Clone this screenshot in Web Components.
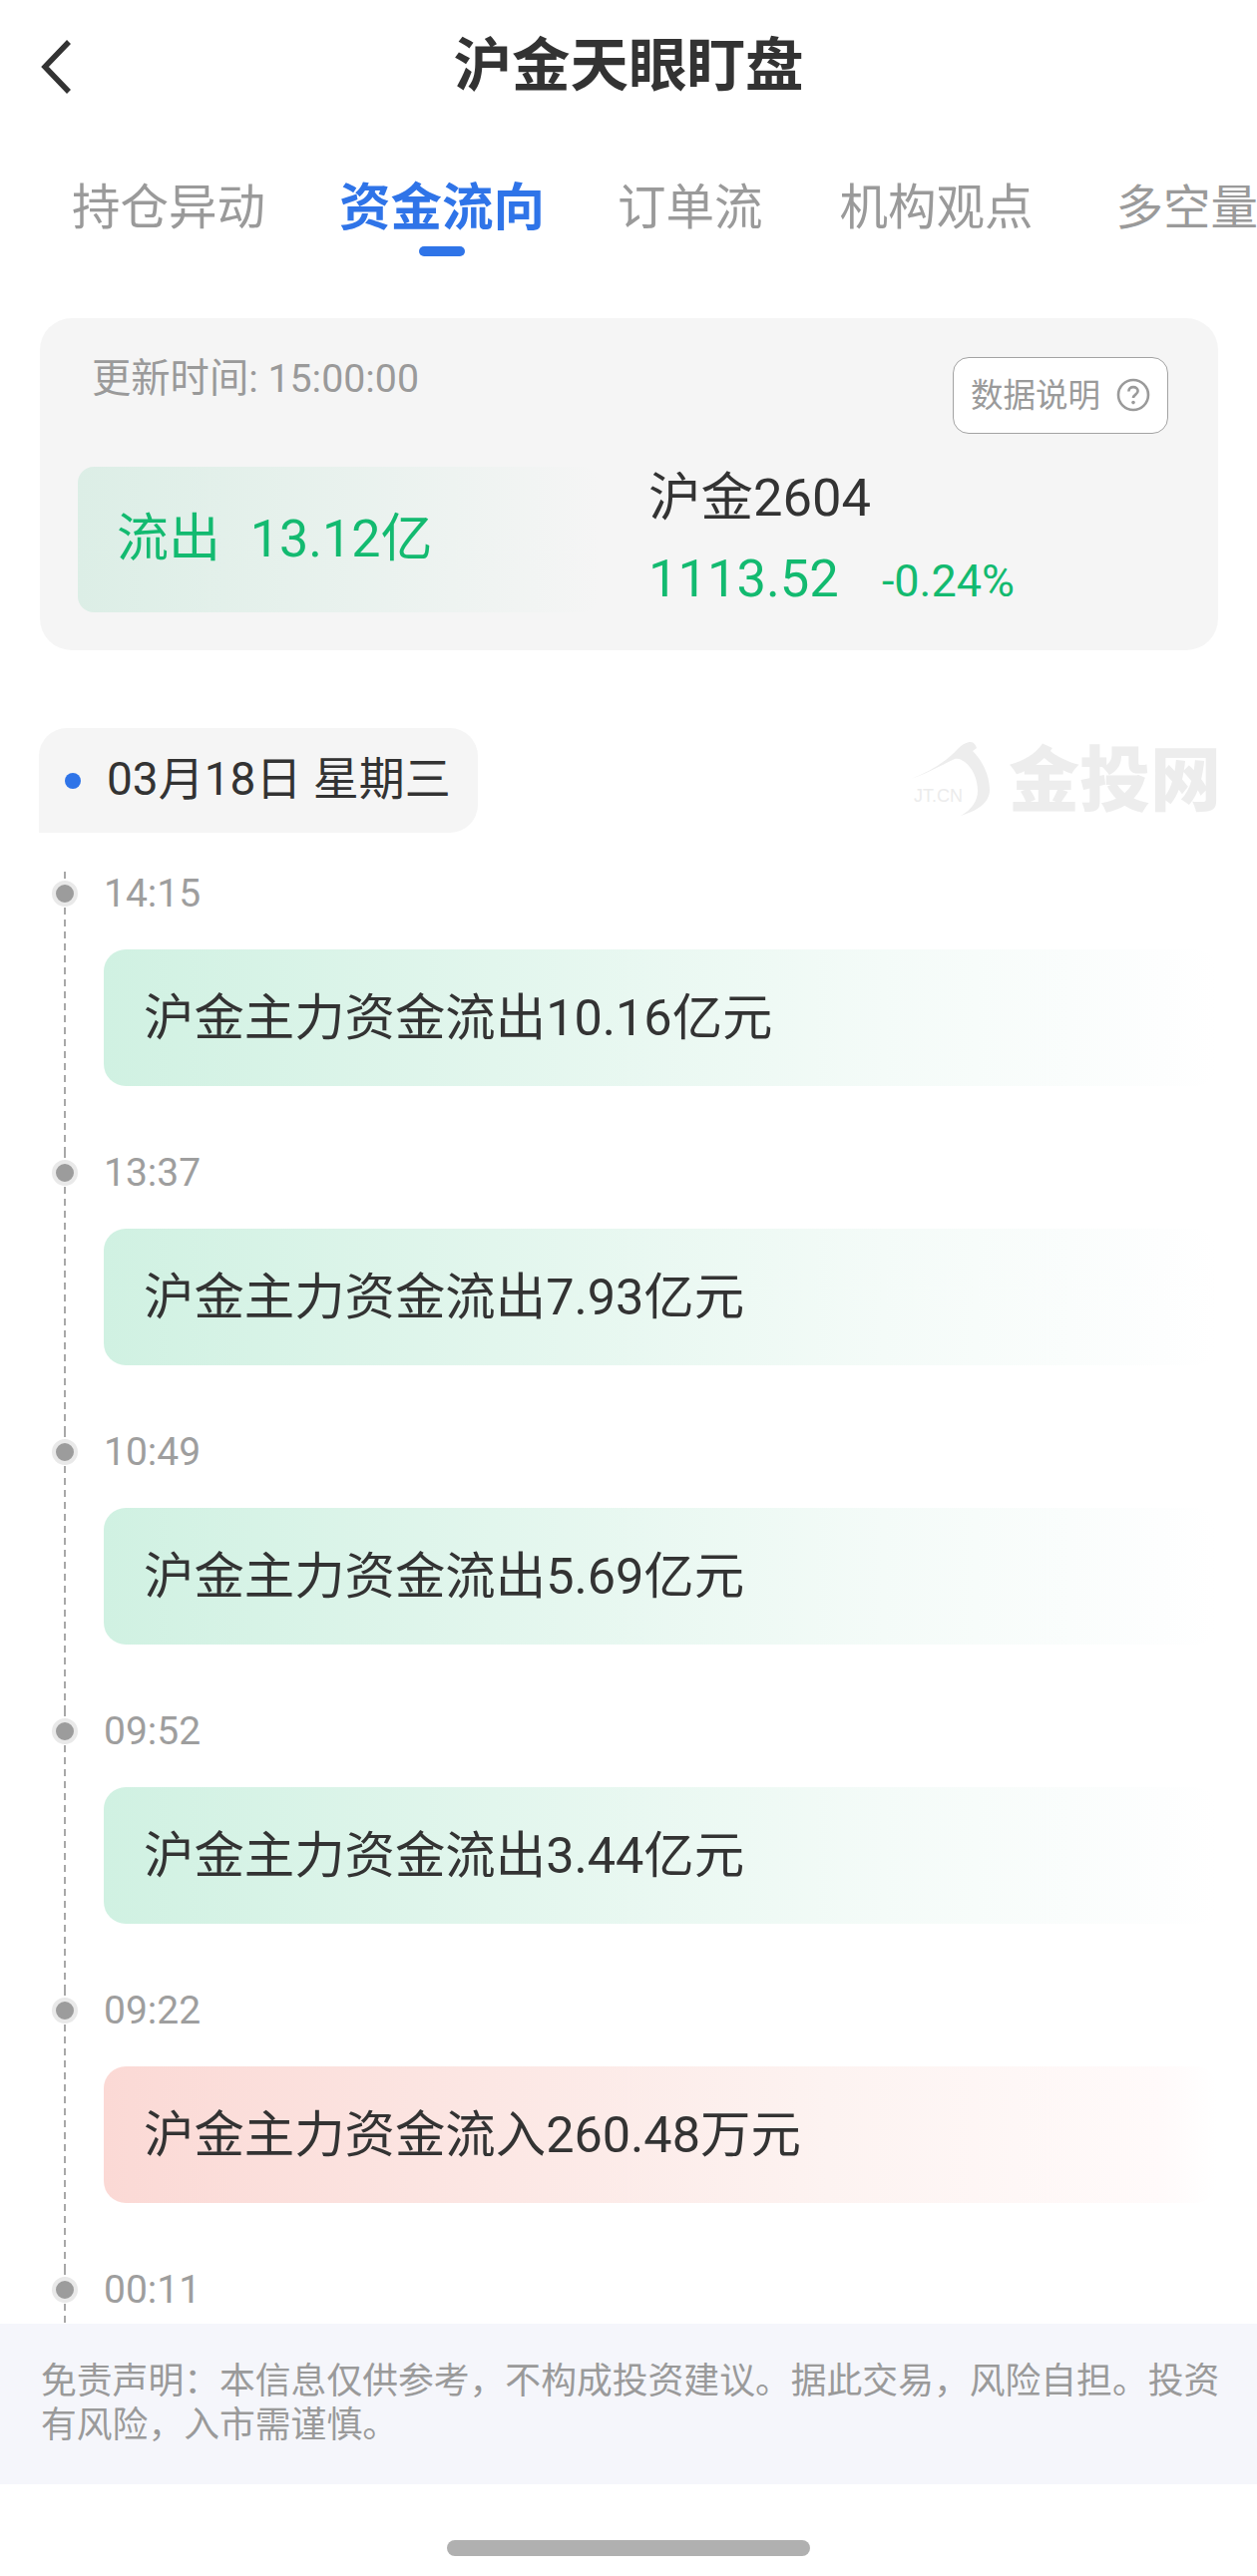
<!DOCTYPE html>
<html lang="zh-CN"><head><meta charset="utf-8"><style>
html,body{margin:0;padding:0;background:#fff}
body{width:1260px;height:2583px;overflow:hidden;display:flex;flex-direction:column;font-family:Roboto,"Noto Sans CJK SC",sans-serif;color:#333}
jt-timeline{flex:1;min-height:0}
</style></head><body>
<jt-header>沪金天眼盯盘</jt-header>
<jt-tabs></jt-tabs>
<jt-summary></jt-summary>
<jt-date>03月18日 星期三</jt-date>
<jt-timeline>
<jt-event time="14:15" kind="out">沪金主力资金流出10.16亿元</jt-event>
<jt-event time="13:37" kind="out">沪金主力资金流出7.93亿元</jt-event>
<jt-event time="10:49" kind="out">沪金主力资金流出5.69亿元</jt-event>
<jt-event time="09:52" kind="out">沪金主力资金流出3.44亿元</jt-event>
<jt-event time="09:22" kind="in">沪金主力资金流入260.48万元</jt-event>
<jt-event time="00:11"></jt-event>
</jt-timeline>
<jt-disclaimer>免责声明：本信息仅供参考，不构成投资建议。据此交易，风险自担。投资有风险，入市需谨慎。</jt-disclaimer>
<jt-homebar></jt-homebar>
<script>
function def(name, html, init){
  customElements.define(name, class extends HTMLElement{
    connectedCallback(){
      if(this.shadowRoot) return;
      const r=this.attachShadow({mode:'open'});
      r.innerHTML=html;
      if(init) init(r,this);
    }
  });
}
def('jt-header',`<style>
:host{display:flex;height:130px;align-items:center;justify-content:center;position:relative;flex:none}
svg{position:absolute;left:38px;top:38px}
.t{font-size:58.5px;font-weight:700;line-height:70px;color:#333;padding-top:2px}
</style><svg width="36" height="58" viewBox="0 0 36 58" fill="none"><path d="M31 4 7 29l24 25" stroke="#333" stroke-width="5.5"/></svg><div class="t"><slot></slot></div>`);

def('jt-tabs',`<style>
:host{display:flex;flex:none;height:128px;padding:49px 0 0 72px;box-sizing:border-box;overflow:hidden;white-space:nowrap}
.tab{flex:none;display:flex;flex-direction:column;align-items:center;font-size:48.5px;line-height:60px;color:#9a9a9a;margin-right:74px}
.on{font-size:51.5px;font-weight:700;color:#2f74e8;margin-right:73px}
.on::after{content:"";width:46px;height:10px;border-radius:5px;background:#2f74e8;margin-top:8px}
.t3{margin-right:77px}.t4{margin-right:83px}.t5{margin-right:0;font-size:47.5px}
</style>
<div class="tab">持仓异动</div><div class="tab on">资金流向</div><div class="tab t3">订单流</div><div class="tab t4">机构观点</div><div class="tab t5">多空量</div>`);

def('jt-summary',`<style>
:host{display:block;flex:none;margin:61px 39px 0 40px;height:333px;box-sizing:border-box;padding:39px 50px 0 38px;background:#f5f5f5;border-radius:32px}
.top{display:flex;justify-content:space-between;align-items:flex-start}
.upd{margin-left:14px;font-size:39.3px;line-height:44px;color:#9a9a9a}
.btn{width:216px;height:77px;box-sizing:border-box;padding-bottom:7px;border:1.5px solid #a3a3a3;border-radius:16px;background:#fff;display:flex;align-items:center;justify-content:center;gap:16px;font-size:32.5px;color:#9a9a9a}
.btn svg{margin-top:5px}
.row{display:flex;margin-top:33px}
.flow{width:522px;height:146px;border-radius:16px;box-sizing:border-box;padding-left:39px;background:linear-gradient(90deg,#dceee6,rgba(245,245,245,0));display:flex;align-items:center;color:#13ba70;font-size:52px;line-height:60px;white-space:pre;word-spacing:2px}
.info{margin-left:50px}
.name{font-size:52.5px;line-height:60px;color:#333;margin-top:1px}
.px{display:flex;align-items:baseline;color:#13ba70;margin-top:21px;line-height:60px}
.p{font-size:52.5px}.c{font-size:45px;margin-left:43px}
</style>
<div class="top"><div class="upd">更新时间: 15:00:00</div>
<div class="btn">数据说明<svg width="34" height="34" viewBox="0 0 34 34" fill="none"><circle cx="17" cy="17" r="15" stroke="#9a9a9a" stroke-width="2.6"/><path d="M12.4 13.4c0-2.7 2-4.3 4.6-4.3s4.6 1.6 4.6 4c0 3.6-4.6 3.5-4.6 7" stroke="#9a9a9a" stroke-width="2.6"/><circle cx="17" cy="24.6" r="1.8" fill="#9a9a9a"/></svg></div></div>
<div class="row"><div class="flow">流出  13.12亿</div>
<div class="info"><div class="name">沪金2604</div><div class="px"><span class="p">1113.52</span><span class="c">-0.24%</span></div></div></div>`);

def('jt-date',`<style>
:host{display:flex;flex:none;justify-content:space-between;align-items:flex-start;margin:78px 40px 29px;height:105px}
.pill{display:flex;align-items:center;background:#f5f5f5;border-radius:28px 28px 28px 0;margin-left:-1px;padding:0 27px 11px 26px;box-sizing:border-box;height:105px;font-size:46px;color:#333;white-space:nowrap}
.pill i{width:16px;height:16px;border-radius:50%;background:#2f74e8;margin:11px 26px 0 0}
svg{display:block;margin-top:-12px;margin-right:-16px}
</style>
<div class="pill"><i></i><slot></slot></div>
<svg width="328" height="114" viewBox="908 718 328 114"><path d="M913 781C932 774 948 764 960 751c5-5 9-7 13-7 3 0 5 3 6 6l-4 3c10 10 17 25 17 39 0 11-9 20-29 26 11-6 17-15 17-25 0-12-5-23-13-29-4-3-7-4-10-3-13 6-26 14-44 20Z" fill="#ededed"/><text x="916" y="804" font-family="Liberation Sans" font-size="18" fill="#ececec">JT.CN</text><text x="1011" y="807" font-family="Noto Sans CJK SC" font-weight="900" font-size="71" fill="#ededed">金投网</text></svg>`);

def('jt-timeline',`<style>:host{display:block;overflow:hidden;padding-top:10px}</style><slot></slot>`);

def('jt-event',`<style>
:host{display:grid;grid-template-columns:104px 1fr;height:280px;padding-right:40px;box-sizing:border-box;
background:repeating-linear-gradient(180deg,#a8a8a8 0 7px,transparent 7px 12px) 64px 0/2px 100% no-repeat}
.dot{width:26px;height:26px;box-sizing:border-box;border:4px solid #e9e9e9;border-radius:50%;background:#9c9c9c;margin:9px 0 0 52px}
.time{font-size:39px;line-height:44px;color:#9e9e9e}
.card{height:137px;margin-top:34px;box-sizing:border-box;padding:0 0 9px 40px;border-radius:22px;display:flex;align-items:center;font-size:50.4px;color:#333}
.out{background:linear-gradient(90deg,#d0f1e2,#f4fbf8 70%,#fdfefe 95%,rgba(255,255,255,0))}
.in{background:linear-gradient(90deg,#fbd9d5,#fdf3f1 65%,#fffafa 95%,rgba(255,255,255,0))}
</style><div class="dot"></div><div><div class="time"></div><div class="card"><slot></slot></div></div>`,
(r,h)=>{r.querySelector('.time').textContent=h.getAttribute('time');const k=h.getAttribute('kind'),c=r.querySelector('.card');if(k)c.classList.add(k);else c.style.display='none';});

def('jt-disclaimer',`<style>
:host{display:block;flex:none;height:161px;box-sizing:border-box;padding:36px 20px 0 41px;background:#f5f6fb;color:#9a9a9a;font-size:35.8px;line-height:44px}
</style><slot></slot>`);

def('jt-homebar',`<style>
:host{display:flex;flex:none;height:92px;justify-content:center;padding-top:56px;box-sizing:border-box}
i{width:364px;height:16px;border-radius:8px;background:#b0b0b0}
</style><i></i>`);
</script></body></html>
